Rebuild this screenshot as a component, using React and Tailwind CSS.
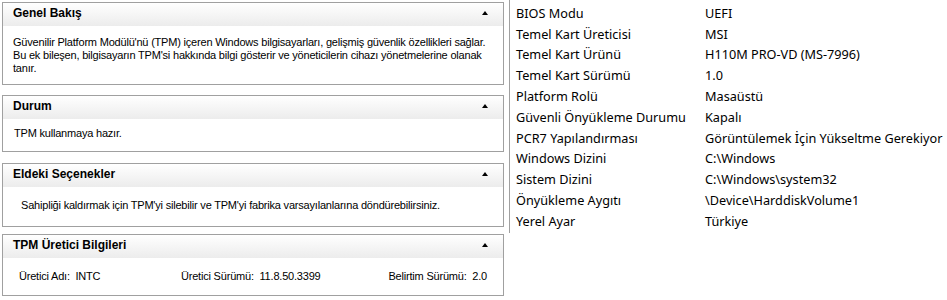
import React from "react";

const leftFont = { fontFamily: '"Liberation Sans", Arial, sans-serif' };

function Arrow() {
  return (
    <svg width="6" height="4" viewBox="0 0 6 4" className="block mt-[5px]">
      <polygon points="3,0 6,4 0,4" fill="#000" />
    </svg>
  );
}

function Panel({ title, h, children, bodyClass }) {
  return (
    <div
      className="border border-[#a0a0a0] bg-white flex flex-col"
      style={{ height: h }}
    >
      <div className="h-[23px] flex items-start pt-[3px] justify-between pl-[10px] pr-[15px] bg-gradient-to-b from-white to-[#ececec]">
        <span className="font-bold text-[12px] leading-[14px] text-black">{title}</span>
        <Arrow />
      </div>
      <div className={bodyClass}>{children}</div>
    </div>
  );
}

const rows = [
  ["BIOS Modu", "UEFI"],
  ["Temel Kart Üreticisi", "MSI"],
  ["Temel Kart Ürünü", "H110M PRO-VD (MS-7996)"],
  ["Temel Kart Sürümü", "1.0"],
  ["Platform Rolü", "Masaüstü"],
  ["Güvenli Önyükleme Durumu", "Kapalı"],
  ["PCR7 Yapılandırması", "Görüntülemek İçin Yükseltme Gerekiyor"],
  ["Windows Dizini", "C:\\Windows"],
  ["Sistem Dizini", "C:\\Windows\\system32"],
  ["Önyükleme Aygıtı", "\\Device\\HarddiskVolume1"],
  ["Yerel Ayar", "Türkiye"],
];

export default function App() {
  return (
    <div className="w-[947px] h-[300px] bg-white flex overflow-hidden">
      <div className="w-[509px] pl-[2px] pr-[5px] pt-[2px] flex flex-col" style={leftFont}>
        <Panel
          title="Genel Bakış"
          h={83}
          bodyClass="px-[10px] pt-[10px] text-[11px] leading-[13px] text-black tracking-[-0.2px]"
        >
          Güvenilir Platform Modülü'nü (TPM) içeren Windows bilgisayarları, gelişmiş güvenlik özellikleri sağlar.
          Bu ek bileşen, bilgisayarın TPM'si hakkında bilgi gösterir ve yöneticilerin cihazı yönetmelerine olanak
          tanır.
        </Panel>
        <div className="h-[10px]" />
        <Panel
          title="Durum"
          h={57}
          bodyClass="px-[11px] pt-[8px] text-[11px] leading-[13px] text-black tracking-[-0.2px]"
        >
          TPM kullanmaya hazır.
        </Panel>
        <div className="h-[11px]" />
        <Panel
          title="Eldeki Seçenekler"
          h={64}
          bodyClass="px-[18px] pt-[12px] text-[11px] leading-[13px] text-black tracking-[-0.2px]"
        >
          Sahipliği kaldırmak için TPM'yi silebilir ve TPM'yi fabrika varsayılanlarına döndürebilirsiniz.
        </Panel>
        <div className="h-[7px]" />
        <Panel
          title="TPM Üretici Bilgileri"
          h={62}
          bodyClass="pl-[16px] pr-[16px] pt-[12px] text-[11px] leading-[13px] text-black tracking-[-0.2px] flex"
        >
          <span className="w-[162px]">Üretici Adı:&nbsp; INTC</span>
          <span className="flex-1">Üretici Sürümü:&nbsp; 11.8.50.3399</span>
          <span>Belirtim Sürümü:&nbsp; 2.0</span>
        </Panel>
      </div>
      <div className="flex-1 flex flex-col">
        <div
          className="border-l border-[#a0a0a0] pl-[6px] pt-[3px] h-[233px]"
          style={{ fontFamily: '"Noto Sans", "Open Sans", sans-serif' }}
        >
          {rows.map(([k, v]) => (
            <div key={k} className="flex h-[20.8px] items-center text-[12.7px] text-black">
              <span className="w-[189px] shrink-0 whitespace-nowrap">{k}</span>
              <span className="whitespace-nowrap">{v}</span>
            </div>
          ))}
        </div>
      </div>
    </div>
  );
}
